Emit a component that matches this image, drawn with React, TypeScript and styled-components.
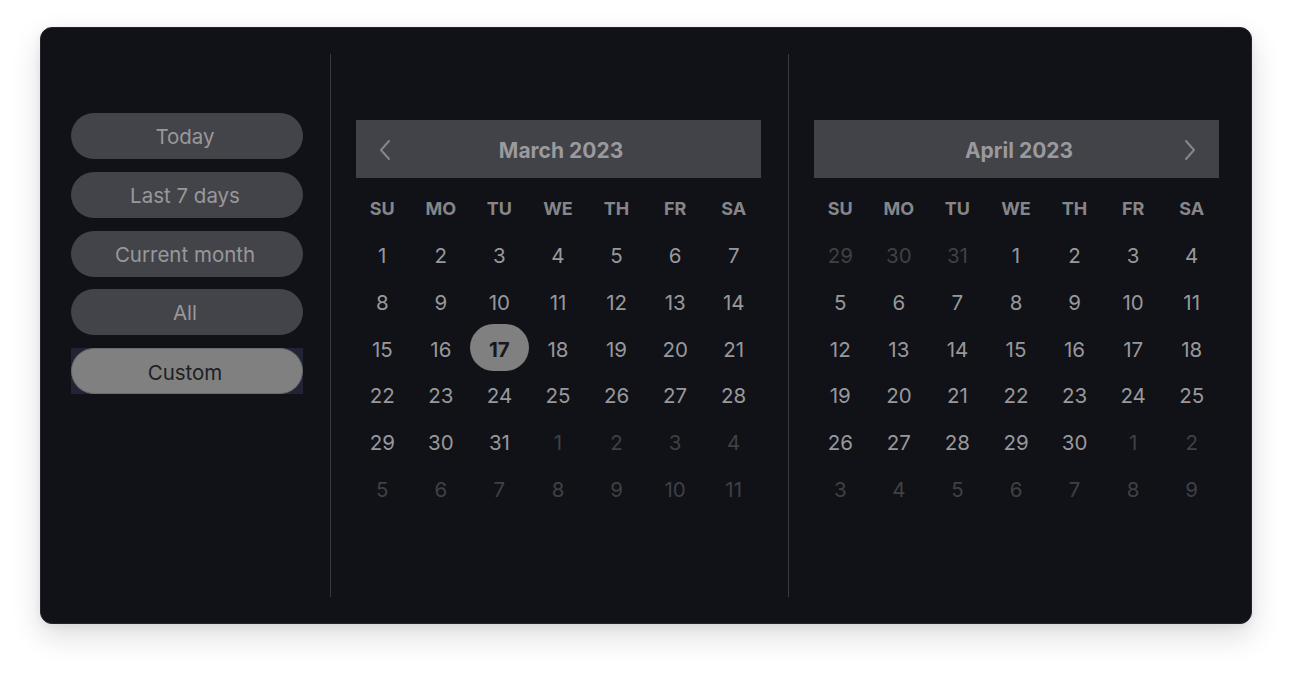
import React from 'react';
import styled, { createGlobalStyle } from 'styled-components';

const GlobalStyle = createGlobalStyle`
  html, body {
    margin: 0;
    padding: 0;
    background: #ffffff;
  }
  * {
    box-sizing: border-box;
  }
`;

const Page = styled.div`
  width: 1292px;
  height: 678px;
  padding: 27px 40px;
  font-family: Inter, 'Noto Sans', sans-serif;
`;

const Card = styled.div`
  display: flex;
  width: 1212px;
  height: 597px;
  padding: 26px 32px 26px 30px;
  background: #111217;
  border: 1px solid #23242e;
  border-radius: 12px;
  box-shadow: 0 12px 30px rgba(0, 0, 0, 0.14), 0 2px 8px rgba(0, 0, 0, 0.06);
`;

const Sidebar = styled.div`
  display: flex;
  flex-direction: column;
  gap: 12.75px;
  width: 232px;
  padding-top: 59px;
`;

const PresetButton = styled.button<{ $active?: boolean }>`
  height: 46px;
  width: 100%;
  padding: 1px 4px 0 0;
  border: ${p => (p.$active ? '1px solid #6a6a70' : 'none')};
  border-radius: 23px;
  background: ${p => (p.$active ? '#808080' : '#434449')};
  color: ${p => (p.$active ? '#1e1f24' : '#98989c')};
  font-family: Inter, 'Noto Sans', sans-serif;
  font-size: 20.5px;
  font-weight: 400;
  line-height: 46px;
  cursor: pointer;
`;

const ActiveWrap = styled.div`
  background: #222335;
  height: 46px;
  display: flex;
`;

const Divider = styled.div`
  width: 1px;
  align-self: stretch;
  background: #3a3b41;
  margin: 0 25px 0 27px;
`;

const Calendar = styled.div`
  width: 405px;
  padding-top: 66px;
`;

const Header = styled.div`
  position: relative;
  display: flex;
  align-items: center;
  justify-content: center;
  height: 58px;
  padding: 3px 0 0 5px;
  background: #424348;
  color: #9a9a9e;
  font-size: 21px;
  font-weight: 700;
`;

const NavButton = styled.span<{ $side: 'left' | 'right' }>`
  position: absolute;
  top: 19px;
  ${p => (p.$side === 'left' ? 'left: 22px;' : 'right: 22px;')}
  display: flex;
  width: 14px;
  height: 22px;
  align-items: center;
  justify-content: center;
`;

const Grid = styled.div`
  display: grid;
  grid-template-columns: repeat(7, 1fr);
  margin: 7px -2px 0 -3px;
`;

const WeekDay = styled.div`
  height: 46px;
  display: flex;
  align-items: center;
  justify-content: center;
  color: #86868a;
  font-size: 18px;
  font-weight: 700;
`;

const Day = styled.div<{ $muted?: boolean; $selected?: boolean }>`
  height: 46.7px;
  display: flex;
  align-items: center;
  justify-content: center;
  padding-top: 3px;
  font-size: 20.5px;
  font-weight: ${p => (p.$selected ? 700 : 400)};
  color: ${p => (p.$selected ? '#17181c' : p.$muted ? '#3f4045' : '#98989c')};
  background: ${p => (p.$selected ? '#808080' : 'transparent')};
  border-radius: 24px;
`;

const Chevron = ({ dir }: { dir: 'left' | 'right' }) => (
  <svg width="12" height="22" viewBox="0 0 12 22" fill="none">
    <path
      d={dir === 'left' ? 'M10 2 L2 11 L10 20' : 'M2 2 L10 11 L2 20'}
      stroke="#85858a"
      strokeWidth="2"
      strokeLinecap="round"
      strokeLinejoin="round"
    />
  </svg>
);

const weekDays = ['SU', 'MO', 'TU', 'WE', 'TH', 'FR', 'SA'];

type Cell = { day: number; muted: boolean };

function buildMonth(startOffset: number, length: number, prevLength: number): Cell[] {
  const cells: Cell[] = [];
  for (let i = startOffset - 1; i >= 0; i--) cells.push({ day: prevLength - i, muted: true });
  for (let d = 1; d <= length; d++) cells.push({ day: d, muted: false });
  let next = 1;
  while (cells.length < 42) cells.push({ day: next++, muted: true });
  return cells;
}

const months = [
  { title: 'March 2023', cells: buildMonth(0, 31, 28), nav: 'left' as const, selected: 17 },
  { title: 'April 2023', cells: buildMonth(3, 30, 31), nav: 'right' as const, selected: -1 },
];

const presets = ['Today', 'Last 7 days', 'Current month', 'All'];

const App = () => {
  return (
    <Page>
      <GlobalStyle />
      <Card>
        <Sidebar>
          {presets.map(label => (
            <PresetButton key={label}>{label}</PresetButton>
          ))}
          <ActiveWrap>
            <PresetButton $active>Custom</PresetButton>
          </ActiveWrap>
        </Sidebar>
        {months.map(month => (
          <React.Fragment key={month.title}>
            <Divider />
            <Calendar>
              <Header>
                <NavButton $side={month.nav}>
                  <Chevron dir={month.nav} />
                </NavButton>
                {month.title}
              </Header>
              <Grid>
                {weekDays.map(w => (
                  <WeekDay key={w}>{w}</WeekDay>
                ))}
                {month.cells.map((c, i) => (
                  <Day key={i} $muted={c.muted} $selected={!c.muted && c.day === month.selected}>
                    {c.day}
                  </Day>
                ))}
              </Grid>
            </Calendar>
          </React.Fragment>
        ))}
      </Card>
    </Page>
  );
};

export default App;
